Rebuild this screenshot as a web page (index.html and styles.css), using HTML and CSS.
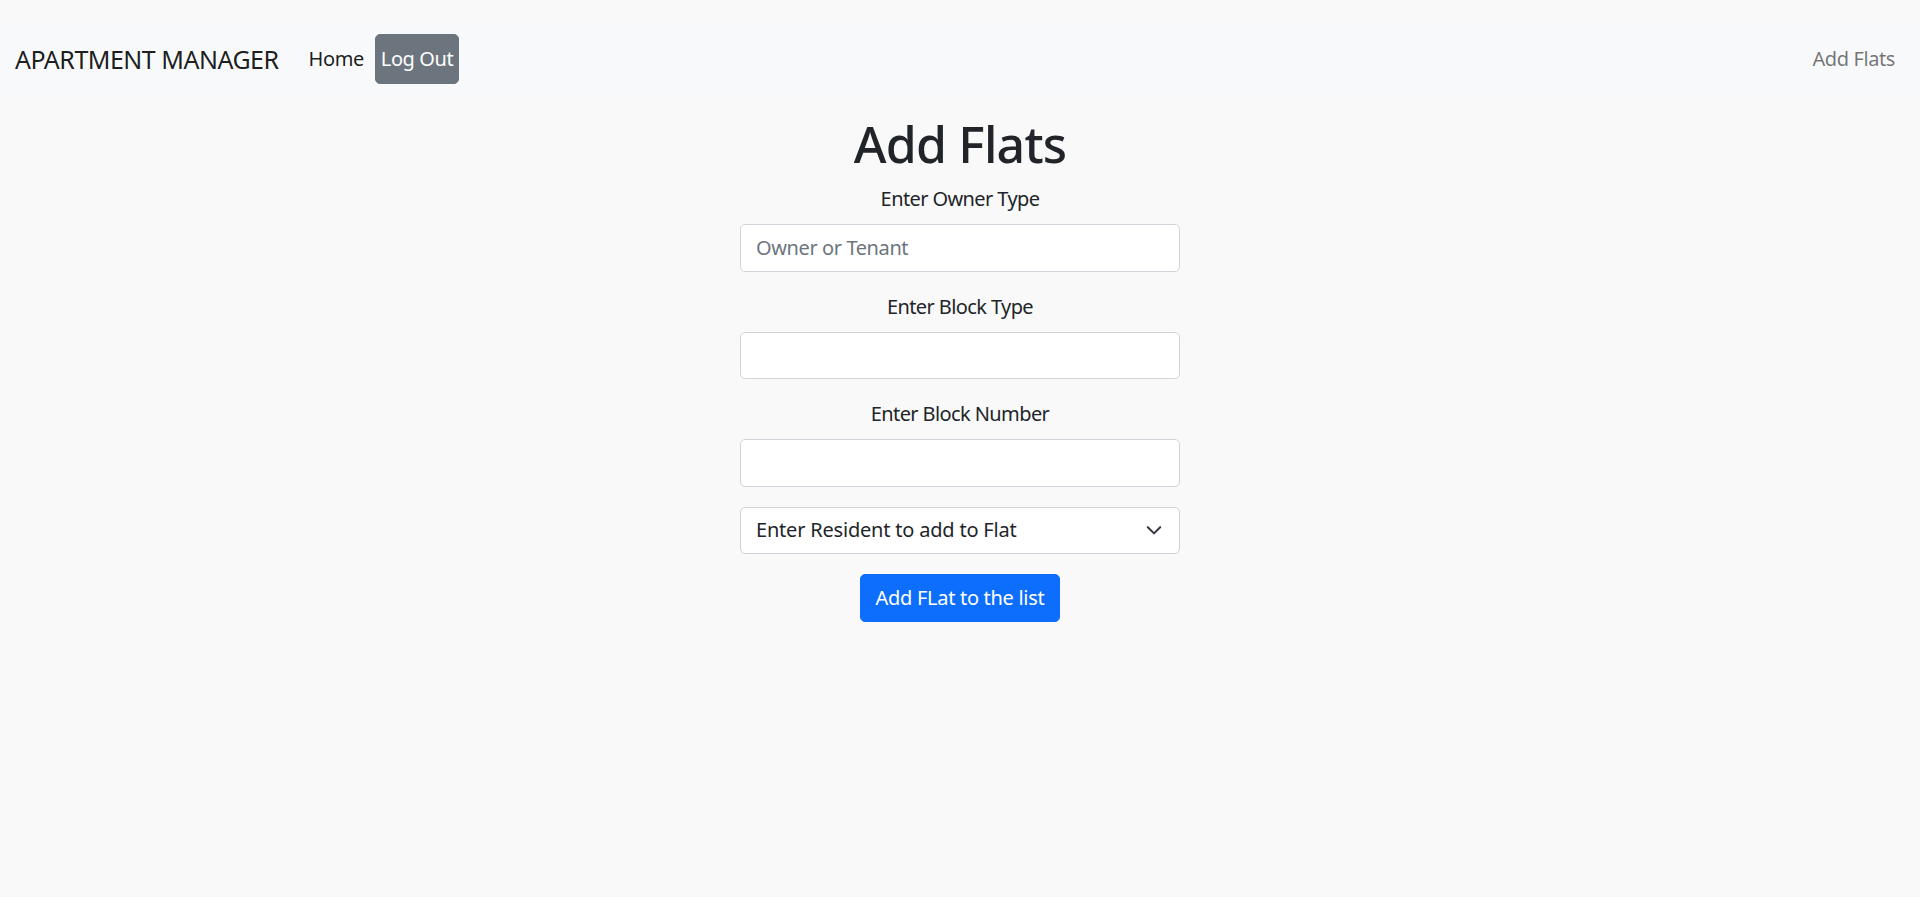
FILE: index.html
```html
<!DOCTYPE html>
<html lang="en">
<head>
<meta charset="utf-8">
<title>Add Flats</title>
<link rel="stylesheet" href="styles.css">
</head>
<body>
<div class="top-gap"></div>
<nav class="navbar">
  <div class="nav-left">
    <span class="brand">APARTMENT MANAGER</span>
    <a class="nav-link">Home</a>
    <a class="nav-btn">Log Out</a>
  </div>
  <a class="nav-link muted">Add Flats</a>
</nav>
<main class="page">
  <h1 class="title">Add Flats</h1>
  <form class="form">
    <div class="group">
      <label class="label">Enter Owner Type</label>
      <input class="control" type="text" placeholder="Owner or Tenant">
    </div>
    <div class="group">
      <label class="label">Enter Block Type</label>
      <input class="control" type="text">
    </div>
    <div class="group">
      <label class="label">Enter Block Number</label>
      <input class="control" type="text">
    </div>
    <div class="group">
      <div class="select">
        <span>Enter Resident to add to Flat</span>
        <svg class="chev" viewBox="0 0 16 16" width="18" height="18"><path d="M2.5 5.5l5.5 5.5 5.5-5.5" fill="none" stroke="#343a40" stroke-width="1.8" stroke-linecap="round" stroke-linejoin="round"/></svg>
      </div>
    </div>
    <button class="btn-primary" type="button">Add FLat to the list</button>
  </form>
</main>
</body>
</html>
```

FILE: styles.css
```css
* { box-sizing: border-box; }
html, body { margin: 0; padding: 0; }
body {
  background: #f9f9f9;
  font-family: "Noto Sans", "Open Sans", sans-serif;
  font-size: 20px;
  line-height: 1.5;
  letter-spacing: -0.4px;
  color: #212529;
  min-height: 897px;
}
.top-gap { height: 24px; }
.navbar {
  background: #f8f9fa;
  height: 70px;
  padding: 10px 15px;
  display: flex;
  align-items: center;
  justify-content: space-between;
}
.nav-left { display: flex; align-items: center; height: 50px; }
.brand {
  font-size: 25px;
  color: rgba(0,0,0,.9);
  margin-right: 20px;
  line-height: 37px;
  letter-spacing: -0.5px;
}
.nav-link {
  color: rgba(0,0,0,.9);
  padding: 0 10px;
  text-decoration: none;
  cursor: pointer;
}
.nav-link.muted { color: rgba(0,0,0,.55); }
.nav-btn {
  display: flex;
  align-items: center;
  height: 50px;
  padding: 0 5px;
  background: #6c757d;
  color: #fff;
  border: 1px solid #6c757d;
  border-radius: 5px;
  margin-left: 1px;
}
.page {
  display: flex;
  flex-direction: column;
  align-items: center;
  padding-top: 20px;
}
.title {
  font-size: 50px;
  font-weight: 500;
  line-height: 60px;
  margin: 0 0 10px;
  letter-spacing: -0.8px;
}
.form {
  width: 440px;
  display: flex;
  flex-direction: column;
  align-items: center;
}
.group { width: 100%; margin-bottom: 20px; display: flex; flex-direction: column; }
.label {
  text-align: center;
  line-height: 30px;
  margin-bottom: 10px;
  letter-spacing: -0.6px;
}
.control {
  width: 100%;
  height: 47.5px;
  border: 1px solid #ced4da;
  border-radius: 5px;
  background: #fff;
  padding: 7px 15px;
  font: inherit;
  letter-spacing: -0.4px;
  color: #212529;
}
.control::placeholder { color: #6c757d; }
.select {
  width: 100%;
  height: 47.5px;
  border: 1px solid #ced4da;
  border-radius: 5px;
  background: #fff;
  padding: 0 16px 0 15px;
  display: flex;
  align-items: center;
  justify-content: space-between;
  letter-spacing: -0.2px;
}
.chev { display: block; }
.btn-primary {
  font: inherit;
  letter-spacing: -0.3px;
  color: #fff;
  background: #0d6efd;
  border: 1px solid #0d6efd;
  border-radius: 5px;
  height: 48px;
  padding: 0 15px;
}
```
